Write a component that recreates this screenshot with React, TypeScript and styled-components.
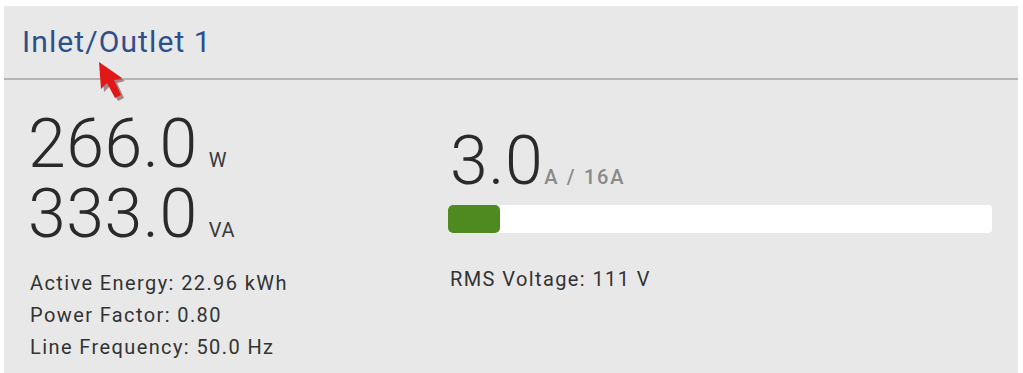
import React from 'react';
import styled, { createGlobalStyle } from 'styled-components';

const GlobalStyle = createGlobalStyle`
  html, body {
    margin: 0;
    padding: 0;
    background: #ffffff;
    font-family: Roboto, 'Liberation Sans', sans-serif;
  }
`;

const Panel = styled.section`
  position: relative;
  margin: 6px 0 0 4px;
  width: 1014px;
  height: 367px;
  background: #e8e8e8;
  box-sizing: border-box;
`;

const Header = styled.header`
  height: 74px;
  display: flex;
  align-items: center;
  padding: 0 0 2px 18px;
  border-bottom: 2px solid #b4b4b4;
  box-sizing: border-box;
`;

const Title = styled.h2`
  margin: 0;
  font-size: 30px;
  font-weight: 400;
  color: #2d4f8c;
  letter-spacing: 1.1px;
`;

const Body = styled.div`
  display: grid;
  grid-template-columns: 422px 542px;
  padding: 30px 0 0 24px;
`;

const Column = styled.div`
  display: flex;
  flex-direction: column;
`;

const Reading = styled.div<{ $height: number }>`
  display: flex;
  align-items: baseline;
  height: ${p => p.$height}px;
`;

const BigValue = styled.span`
  font-size: 68px;
  font-weight: 300;
  color: #2a2a2a;
  line-height: 1;
  letter-spacing: 0.5px;
`;

const Unit = styled.span`
  margin-left: 11px;
  font-size: 20px;
  color: #3a3a3a;
  letter-spacing: 0.8px;
`;

const Limit = styled.span`
  margin-left: 1px;
  font-size: 20px;
  font-weight: 500;
  color: #8a8a8a;
  letter-spacing: 1.7px;
  word-spacing: 1px;
`;

const Details = styled.div<{ $top: number; $indent: number }>`
  display: flex;
  flex-direction: column;
  gap: 10px;
  margin-top: ${p => p.$top}px;
  padding-left: ${p => p.$indent}px;
`;

const Detail = styled.div`
  font-size: 20px;
  color: #333333;
  line-height: 22px;
  letter-spacing: 1.4px;
`;

const Track = styled.div`
  height: 28px;
  background: #ffffff;
  border-radius: 4px;
  margin: 8px 0 0 -2px;
  overflow: hidden;
`;

const Fill = styled.div`
  height: 100%;
  background: #4f8a20;
  border-radius: 5px;
`;

const Cursor = styled.svg`
  position: absolute;
  left: 90px;
  top: 51px;
  pointer-events: none;
`;

const current = 3.0;
const rating = 16;

export default function App() {
  return (
    <>
      <GlobalStyle />
      <Panel>
        <Header>
          <Title>Inlet/Outlet 1</Title>
        </Header>
        <Body>
          <Column>
            <Reading $height={70}>
              <BigValue>266.0</BigValue>
              <Unit>W</Unit>
            </Reading>
            <Reading $height={70}>
              <BigValue>333.0</BigValue>
              <Unit>VA</Unit>
            </Reading>
            <Details $top={22} $indent={2}>
              <Detail>Active Energy: 22.96 kWh</Detail>
              <Detail>Power Factor: 0.80</Detail>
              <Detail>Line Frequency: 50.0 Hz</Detail>
            </Details>
          </Column>
          <Column>
            <Reading $height={70} style={{ marginTop: 17 }}>
              <BigValue>3.0</BigValue>
              <Limit>A / 16A</Limit>
            </Reading>
            <Track>
              <Fill style={{ width: `${(current / rating) * 51}%` }} />
            </Track>
            <Details $top={35} $indent={0}>
              <Detail>RMS Voltage: 111 V</Detail>
            </Details>
          </Column>
        </Body>
        <Cursor width="36" height="46" viewBox="0 0 36 46">
          <path d="M6 6 L8 33 L14 27 L22 42 L28 39 L21 24 L29 22 Z" fill="#5a0c0c" opacity="0.45" transform="translate(2 2)" />
          <path d="M5 5 L7 32 L13 26 L21 41 L27 38 L20 23 L28 21 Z" fill="#e01818" />
        </Cursor>
      </Panel>
    </>
  );
}
